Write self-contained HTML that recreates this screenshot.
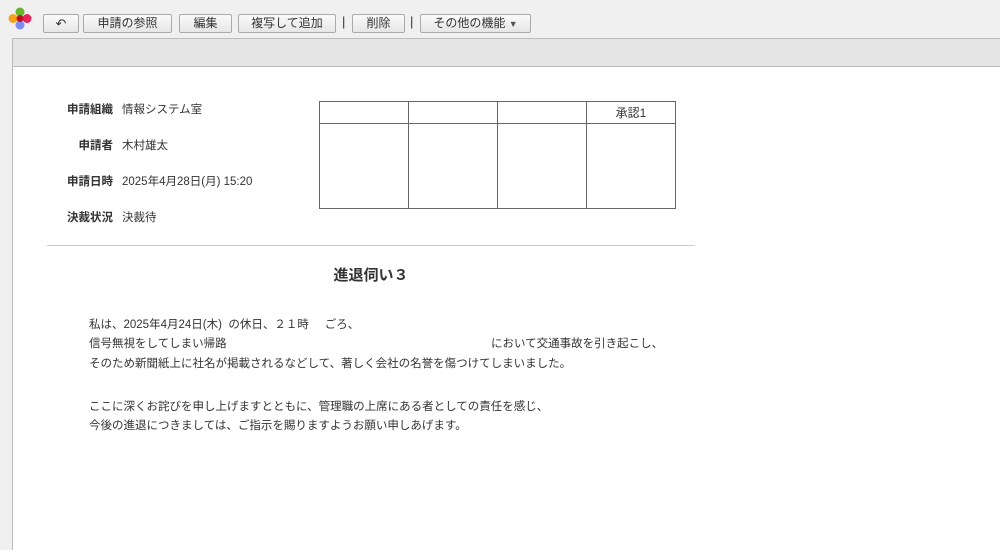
<!DOCTYPE html>
<html><head><meta charset="utf-8"><style>
*{margin:0;padding:0;box-sizing:border-box}
body{width:1000px;height:550px;overflow:hidden;background:#f0f0f0;font-family:"Liberation Sans","Noto Sans CJK JP",sans-serif;font-size:12px;color:#333;position:relative}
.btn{position:absolute;top:14px;height:19px;border:1px solid #aaa;border-radius:2px;background:linear-gradient(#fafafa,#e6e6e6);font-size:12px;line-height:17px;text-align:center;color:#333}
.sep{position:absolute;top:14px;font-size:13px;color:#333}
#main{position:absolute;left:12px;top:38px;width:988px;height:512px;border-left:1px solid #bbb;border-top:1px solid #bbb;background:#fff}
#hdr{height:28px;background:#e5e5e5;border-bottom:1px solid #bbb}
.lbl{position:absolute;font-weight:bold;text-align:right;width:80px;left:33px;font-size:11.5px}
.val{position:absolute;left:122px;font-size:11.5px}
table{position:absolute;left:319px;top:101px;border-collapse:collapse}
td{border:1px solid #666;width:89px}
.t{position:absolute;left:89px;line-height:20px;font-size:11.5px}
</style></head><body>
<svg style="position:absolute;left:7px;top:6px" width="26" height="26" viewBox="0 0 26 26">
<circle cx="13" cy="6" r="4.5" fill="#6ab42d"/><circle cx="6" cy="12.5" r="4.5" fill="#f7a11a"/><circle cx="20" cy="12.5" r="4.5" fill="#e8245c"/><circle cx="13" cy="19" r="4.5" fill="#7d8cf0"/><circle cx="13" cy="12.5" r="3.5" fill="#c01020"/></svg>
<div class="btn" style="left:43px;width:36px;font-size:13px">&#x21B6;</div>
<div class="btn" style="left:83px;width:89px">申請の参照</div>
<div class="btn" style="left:179px;width:53px">編集</div>
<div class="btn" style="left:238px;width:98px">複写して追加</div>
<div class="sep" style="left:342px">|</div>
<div class="btn" style="left:352px;width:53px">削除</div>
<div class="sep" style="left:410px">|</div>
<div class="btn" style="left:420px;width:111px">その他の機能 <span style="font-size:9px;color:#555">▼</span></div>
<div id="main"><div id="hdr"></div></div>
<div class="lbl" style="top:101px">申請組織</div><div class="val" style="top:101px">情報システム室</div>
<div class="lbl" style="top:137px">申請者</div><div class="val" style="top:137px">木村雄太</div>
<div class="lbl" style="top:173px">申請日時</div><div class="val" style="top:173px">2025年4月28日(月) 15:20</div>
<div class="lbl" style="top:209px">決裁状況</div><div class="val" style="top:209px">決裁待</div>
<table><tr style="height:22px"><td></td><td></td><td></td><td style="text-align:center;font-size:12px">承認1</td></tr>
<tr style="height:85px"><td></td><td></td><td></td><td></td></tr></table>
<div style="position:absolute;left:47px;top:245px;width:648px;border-top:1px solid #ccc"></div>
<div style="position:absolute;left:47px;width:648px;top:264px;text-align:center;font-size:15px;font-weight:bold">進退伺い３</div>
<div class="t" style="top:315px">私は、2025年4月24日(木)&nbsp; の休日、２１時&nbsp;&nbsp;&nbsp;&nbsp; ごろ、</div>
<div class="t" style="top:334px">信号無視をしてしまい帰路</div>
<div class="t" style="top:334px;left:491px">において交通事故を引き起こし、</div>
<div class="t" style="top:354px">そのため新聞紙上に社名が掲載されるなどして、著しく会社の名誉を傷つけてしまいました。</div>
<div class="t" style="top:397px">ここに深くお詫びを申し上げますとともに、管理職の上席にある者としての責任を感じ、</div>
<div class="t" style="top:416px">今後の進退につきましては、ご指示を賜りますようお願い申しあげます。</div>
</body></html>
